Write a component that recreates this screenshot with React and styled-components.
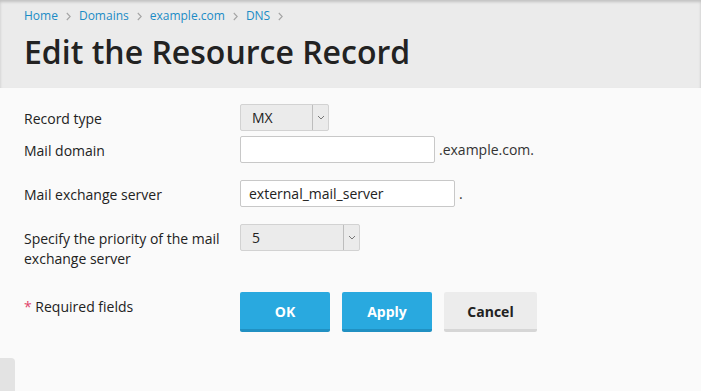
import React from "react";
import styled, { createGlobalStyle } from "styled-components";

const GlobalStyle = createGlobalStyle`
  body {
    margin: 0;
    background: #fafafa;
    font-family: "Open Sans", "Liberation Sans", sans-serif;
    color: #222;
  }
`;

const crumbs = ["Home", "Domains", "example.com", "DNS"];

function Chevron() {
  return (
    <svg width="5" height="9" viewBox="0 0 5 9">
      <path d="M0.8 1l3.4 3.5L0.8 8" fill="none" stroke="#a5a5a5" strokeWidth="1.1" />
    </svg>
  );
}

function Select({ value, width }) {
  return (
    <SelectBox $width={width}>
      <SelectValue>{value}</SelectValue>
      <SelectArrow>
        <svg width="8" height="5" viewBox="0 0 8 5">
          <path d="M1 1l3 3 3-3" fill="none" stroke="#777" strokeWidth="1" />
        </svg>
      </SelectArrow>
    </SelectBox>
  );
}

function App() {
  return (
    <Page>
      <GlobalStyle />
      <Header>
        <Breadcrumbs>
          {crumbs.map((c) => (
            <React.Fragment key={c}>
              <Crumb>{c}</Crumb>
              <Chevron />
            </React.Fragment>
          ))}
        </Breadcrumbs>
        <Title>Edit the Resource Record</Title>
      </Header>

      <Form>
        <Row $gap={5}>
          <Label>Record type</Label>
          <Field>
            <Select value="MX" width={89} />
          </Field>
        </Row>
        <Row $gap={17}>
          <Label>Mail domain</Label>
          <Field>
            <Input $width={195} />
            <Suffix>.example.com.</Suffix>
          </Field>
        </Row>
        <Row $gap={17}>
          <Label>Mail exchange server</Label>
          <Field>
            <Input $width={215}>external_mail_server</Input>
            <Suffix>.</Suffix>
          </Field>
        </Row>
        <Row $gap={23}>
          <Label>Specify the priority of the mail exchange server</Label>
          <Field>
            <Select value="5" width={120} />
          </Field>
        </Row>
        <Row $gap={0}>
          <Label>
            <Star>*</Star> Required fields
          </Label>
          <Buttons>
            <Button $primary>OK</Button>
            <Button $primary>Apply</Button>
            <Button $width={93} $space={11}>Cancel</Button>
          </Buttons>
        </Row>
      </Form>

      <SideTab />
    </Page>
  );
}

const Page = styled.div`
  min-height: 391px;
`;

const Header = styled.div`
  background: #ebebeb;
  height: 88px;
  box-sizing: border-box;
  padding: 8px 24px 0;
  box-shadow: inset 0 2px 3px rgba(0, 0, 0, 0.18);
`;

const Breadcrumbs = styled.div`
  display: flex;
  align-items: center;
  gap: 8px;
  height: 16px;
  font-size: 12px;
  line-height: 16px;
`;

const Crumb = styled.span`
  color: #1b8cc6;
`;

const Title = styled.h1`
  margin: 8px 0 0;
  font-size: 32px;
  line-height: 40px;
  font-weight: 600;
  color: #222;
`;

const Form = styled.div`
  padding: 16px 24px 0;
`;

const Row = styled.div`
  display: flex;
  align-items: flex-start;
  margin-bottom: ${(p) => p.$gap}px;
`;

const Label = styled.div`
  width: 200px;
  padding: 5px 16px 0 0;
  font-size: 14px;
  line-height: 20px;
  color: #222;
`;

const Field = styled.div`
  display: flex;
  align-items: center;
  gap: 4px;
`;

const SelectBox = styled.div`
  width: ${(p) => p.$width}px;
  height: 27px;
  box-sizing: border-box;
  display: flex;
  background: #ebebeb;
  border: 1px solid #d2d2d2;
  border-radius: 2px;
`;

const SelectValue = styled.div`
  flex: 1;
  padding-left: 11px;
  font-size: 14px;
  line-height: 25px;
  color: #222;
`;

const SelectArrow = styled.div`
  width: 15px;
  display: flex;
  align-items: center;
  justify-content: center;
  border-left: 1px solid #bdbdbd;
`;

const Input = styled.div`
  width: ${(p) => p.$width}px;
  height: 27px;
  box-sizing: border-box;
  background: #fff;
  border: 1px solid #c8c8c8;
  border-radius: 2px;
  padding-left: 8px;
  font-size: 14px;
  line-height: 25px;
  color: #222;
`;

const Suffix = styled.span`
  font-size: 14px;
  color: #333;
`;

const Star = styled.span`
  color: #e0436b;
`;

const Buttons = styled.div`
  display: flex;
`;

const Button = styled.div`
  width: ${(p) => p.$width || 90}px;
  height: 40px;
  margin-right: ${(p) => p.$space ?? 12}px;
  box-sizing: border-box;
  display: flex;
  align-items: center;
  justify-content: center;
  padding-top: 2px;
  border-radius: 2px;
  font-size: 14px;
  font-weight: 700;
  background: ${(p) => (p.$primary ? "#29a9df" : "#ececec")};
  color: ${(p) => (p.$primary ? "#fff" : "#222")};
  border-bottom: 3px solid ${(p) => (p.$primary ? "#2090c2" : "#d6d6d6")};
  &:last-child {
    margin-right: 0;
  }
`;

const SideTab = styled.div`
  position: fixed;
  left: 0;
  bottom: 0;
  width: 15px;
  height: 33px;
  background: #e3e3e3;
  border-top-right-radius: 4px;
`;

export default App;
